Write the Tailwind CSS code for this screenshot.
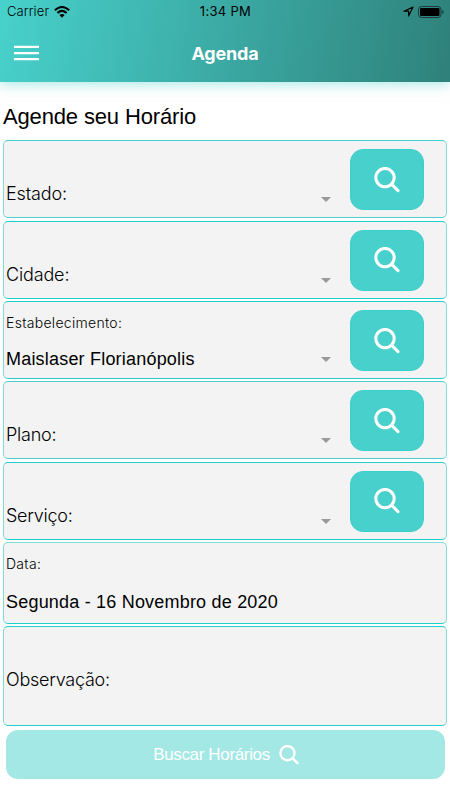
<!DOCTYPE html>
<html lang="pt-BR">

<head>
    <meta charset="UTF-8">
    <meta name="viewport" content="width=device-width, initial-scale=1.0">
    <title>Agenda</title>
    <script src="https://cdn.jsdelivr.net/npm/@tailwindcss/browser@4"></script>
</head>

<body class="bg-white h-screen overflow-hidden text-black font-['Inter',sans-serif]">
    <!-- Shared icons -->
    <svg class="hidden">
        <symbol id="search" viewBox="0 0 26 26">
            <g fill="none" stroke="#fff" stroke-width="3" stroke-linecap="round">
                <circle cx="11" cy="10.6" r="9.2" />
                <path d="M17.8 17.4L24 23.6" />
            </g>
        </symbol>
    </svg>

    <header class="h-[82px] bg-linear-[100deg,#48d1cc,#2f817b] shadow-[0_2px_12px_#48d1cc80]">
        <!-- Status bar -->
        <div class="h-[23px] grid grid-cols-3 items-center pl-[7px] pr-[6px] text-[13px]">
            <div class="flex items-center gap-[5px]">
                <span class="font-light tracking-[0.1px]">Carrier</span>
                <svg class="w-4 h-3" viewBox="0 0 16 12" fill="none" stroke="#000" stroke-width="2.1">
                    <path d="M.8 4.3Q8-2.3 15.2 4.3M3.4 7Q8 2.8 12.6 7" />
                    <path d="M8 11.8L5.4 9.1Q8 7 10.6 9.1Z" fill="#000" stroke="none" />
                </svg>
            </div>
            <span class="text-center tracking-[0.3px]">1:34 PM</span>
            <div class="flex items-center justify-end gap-1">
                <svg class="w-[11px] h-[11px]" viewBox="0 0 11 11" fill="none" stroke="#000" stroke-width="1.2" stroke-linejoin="round">
                    <path d="M10 1L.9 5.2H5.6V10Z" />
                </svg>
                <svg class="w-[26px] h-3" viewBox="0 0 26 12">
                    <rect x=".5" y=".5" width="22.5" height="11" rx="3" fill="none" stroke="#000" stroke-opacity=".55" />
                    <rect x="2" y="2" width="19.5" height="8" rx="1" />
                    <path d="M24.3 4v4q1.4-.6 1.4-2t-1.4-2" fill-opacity=".6" />
                </svg>
            </div>
        </div>
        <!-- Toolbar -->
        <div class="h-[59px] grid grid-cols-3 items-center px-[14px] pt-px">
            <svg class="w-[25px] h-4" viewBox="0 0 25 16" fill="#fff">
                <path d="M0 .7h25v2.3H0zM0 6.9h25v2.3H0zM0 13h25v2.3H0z" />
            </svg>
            <h1 class="text-center text-white text-[18px] font-bold tracking-[-0.2px]">Agenda</h1>
        </div>
    </header>

    <main class="px-[3px] pt-[20px]">
        <h2 class="h-[38.3px] leading-[30px] text-[22px] tracking-[-0.15px] font-['Liberation_Sans',sans-serif]">Agende seu Horário</h2>

        <div class="flex flex-col gap-[2.4px]">
            <div class="h-[78px] flex border border-[#48d1cc] border-x-[#7fdcd8] rounded-[5px] bg-[#f3f3f3] pl-[2px] pr-[22px]">
                <span class="flex-1 self-end pb-[10px] text-[18px] leading-[26px] font-light tracking-[-0.15px]">Estado:</span>
                <span class="self-end mb-[15px] mr-[19px] border-x-[5px] border-t-[5px] border-x-transparent border-t-[#999]"></span>
                <button class="w-[74px] h-[61px] mt-[8px] rounded-[13px] bg-[#48d1cc] border border-[#3dcfcb] flex items-center justify-center">
                    <svg class="w-[26px] h-[26px]"><use href="#search" /></svg>
                </button>
            </div>

            <div class="h-[78px] flex border border-[#20cfca] border-x-[#7fdcd8] rounded-[5px] bg-[#f3f3f3] pl-[2px] pr-[22px]">
                <span class="flex-1 self-end pb-[10px] text-[18px] leading-[26px] font-light tracking-[-0.15px]">Cidade:</span>
                <span class="self-end mb-[15px] mr-[19px] border-x-[5px] border-t-[5px] border-x-transparent border-t-[#999]"></span>
                <button class="w-[74px] h-[61px] mt-[8px] rounded-[13px] bg-[#48d1cc] border border-[#3dcfcb] flex items-center justify-center">
                    <svg class="w-[26px] h-[26px]"><use href="#search" /></svg>
                </button>
            </div>

            <div class="h-[78px] flex border border-[#20cfca] border-x-[#7fdcd8] rounded-[5px] bg-[#f3f3f3] pl-[2px] pr-[22px]">
                <div class="flex-1 flex flex-col justify-between pt-[11px] pb-[6px]">
                    <span class="text-[14px] leading-[20px] font-light tracking-[0.3px]">Estabelecimento:</span>
                    <span class="text-[18px] leading-[26px] tracking-[0.2px] font-['Liberation_Sans',sans-serif]">Maislaser Florianópolis</span>
                </div>
                <span class="self-end mb-[16px] mr-[19px] border-x-[5px] border-t-[5px] border-x-transparent border-t-[#999]"></span>
                <button class="w-[74px] h-[61px] mt-[8px] rounded-[13px] bg-[#48d1cc] border border-[#3dcfcb] flex items-center justify-center">
                    <svg class="w-[26px] h-[26px]"><use href="#search" /></svg>
                </button>
            </div>

            <div class="h-[78px] flex border border-[#48d1cc] border-x-[#7fdcd8] rounded-[5px] bg-[#f3f3f3] pl-[2px] pr-[22px]">
                <span class="flex-1 self-end pb-[10px] text-[18px] leading-[26px] font-light tracking-[-0.25px]">Plano:</span>
                <span class="self-end mb-[15px] mr-[19px] border-x-[5px] border-t-[5px] border-x-transparent border-t-[#999]"></span>
                <button class="w-[74px] h-[61px] mt-[8px] rounded-[13px] bg-[#48d1cc] border border-[#3dcfcb] flex items-center justify-center">
                    <svg class="w-[26px] h-[26px]"><use href="#search" /></svg>
                </button>
            </div>

            <div class="h-[78px] flex border border-[#20cfca] border-x-[#7fdcd8] rounded-[5px] bg-[#f3f3f3] pl-[2px] pr-[22px]">
                <span class="flex-1 self-end pb-[10px] text-[18px] leading-[26px] font-light tracking-[-0.25px]">Serviço:</span>
                <span class="self-end mb-[15px] mr-[19px] border-x-[5px] border-t-[5px] border-x-transparent border-t-[#999]"></span>
                <button class="w-[74px] h-[61px] mt-[8px] rounded-[13px] bg-[#48d1cc] border border-[#3dcfcb] flex items-center justify-center">
                    <svg class="w-[26px] h-[26px]"><use href="#search" /></svg>
                </button>
            </div>

            <div class="h-[81.6px] flex flex-col justify-between border border-[#20cfca] border-t-[#7fdcd8] border-x-[#7fdcd8] rounded-[5px] bg-[#f3f3f3] pl-[2px] pt-[11px] pb-[8px]">
                <span class="text-[14px] leading-[20px] font-light tracking-[0.3px]">Data:</span>
                <span class="text-[18px] leading-[26px] tracking-[0.2px] font-['Liberation_Sans',sans-serif]">Segunda - 16 Novembro de 2020</span>
            </div>

            <div class="h-[100px] flex items-center border border-[#20cfca] border-x-[#7fdcd8] rounded-[5px] bg-[#f3f3f3] pl-[2px] pt-[7px]">
                <span class="text-[18px] leading-[26px] font-light tracking-[-0.25px]">Observação:</span>
            </div>
        </div>

        <button class="mt-[4px] ml-[2.5px] w-[439px] h-[49px] pt-px pl-[2px] rounded-[12px] bg-[#a3e8e4] flex items-center justify-center gap-[9px] text-white">
            <span class="text-[17px] tracking-[-0.35px] font-['Liberation_Sans',sans-serif]">Buscar Horários</span>
            <svg class="w-5 h-5"><use href="#search" /></svg>
        </button>
    </main>
</body>

</html>
